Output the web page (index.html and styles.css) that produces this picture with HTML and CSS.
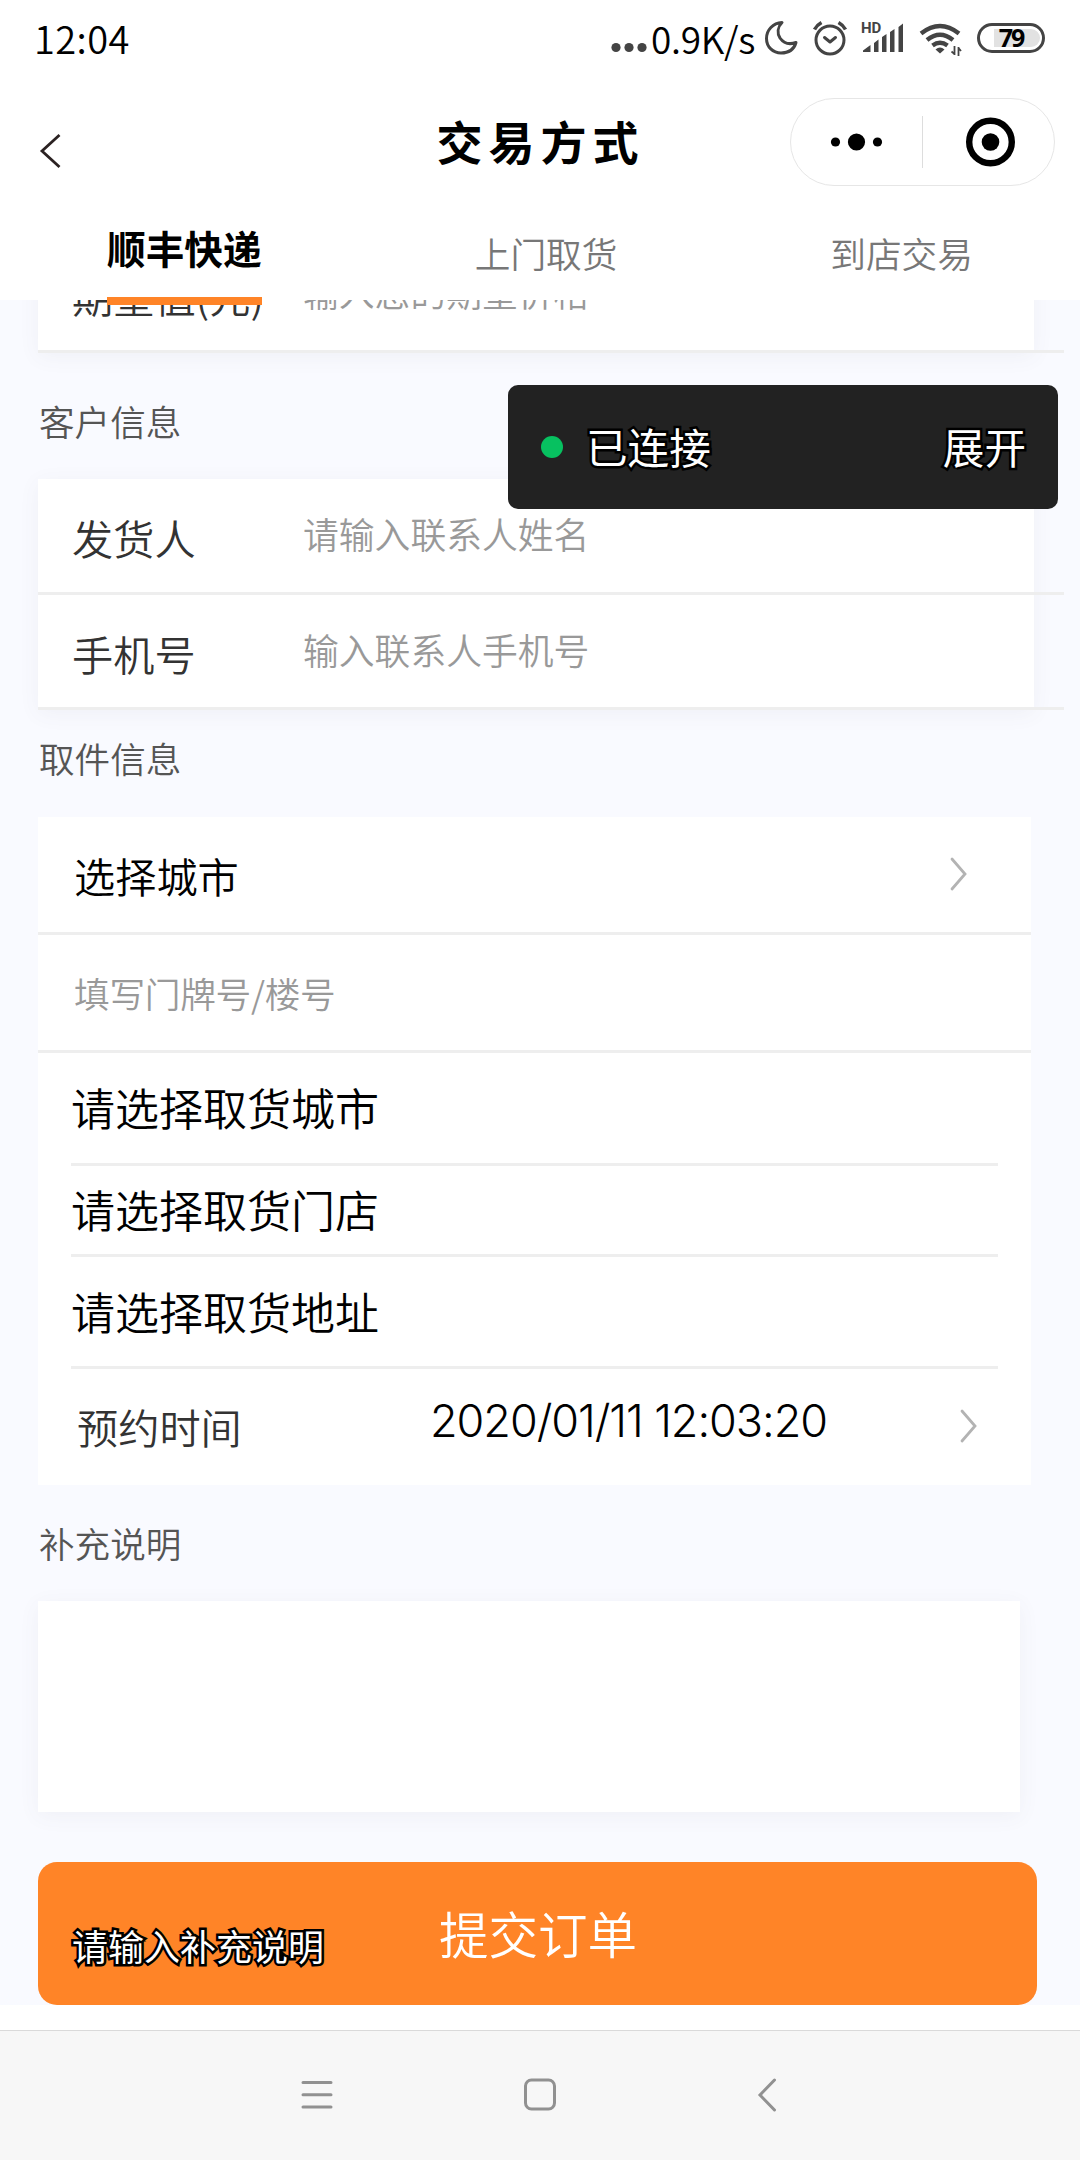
FILE: index.html
```html
<!DOCTYPE html>
<html lang="zh-CN">
<head>
  <meta charset="UTF-8" />
  <meta name="viewport" content="width=device-width, initial-scale=1.0"/>
  <title>交易方式</title>
  <link rel="stylesheet" href="styles.css">
</head>
<body>

  <header class="header">
    <!-- Status bar -->
    <div class="status-bar">
      <span class="time">12:04</span>
      <div class="status-right">
        <svg class="net-dots" width="32" height="60" viewBox="0 0 32 60">
          <circle cx="5" cy="47.5" r="4.6"/><circle cx="18" cy="47.5" r="4.6"/><circle cx="31" cy="47.5" r="4.6"/>
        </svg>
        <span class="speed">0.9K/s</span>
        <svg class="status-icons" width="290" height="60" viewBox="760 0 290 60">
          <!-- moon -->
          <path class="line" d="M782 22.5 C773 23 766.500 30 766.500 38.500 C766.500 47 773 53 781 53 C788.500 53 794 49.500 796 42.500 C789 45 783.500 43 780 38 C777 33 777.500 27 782 22.500 Z"/>
          <!-- alarm -->
          <circle class="line" cx="830" cy="40" r="14"/>
          <path class="line" d="M824.500 37.500 L830 42 L835.500 37.500"/>
          <path class="line thick" d="M814.500 29.500 Q817 25 821.500 22.500 M845.500 29.500 Q843 25 838.500 22.500"/>
          <!-- signal -->
          <text class="hd" x="861" y="33">HD</text>
          <path class="fill" d="M863 52 V50.500 L870.500 45 V52 Z M874 52 V43 L878.500 39.500 V52 Z M882 52 V37 L886.500 34 V52 Z M890 52 V32 L894.500 29 V52 Z M898.500 52 V27 L903 23.500 V52 Z"/>
          <!-- wifi -->
          <path class="line wifi" d="M921 33.500 Q940 18.500 959 33.500 M927 40 Q940 29.500 953 40 M932.500 45.500 Q940 40 947.500 45.500"/>
          <path class="fill" d="M935.500 49.500 Q940 45.500 944.500 49.500 L940 53.500 Z"/>
          <path class="line arrows" d="M954.500 55 V46 M954.500 54 L951.500 51.500 M958.500 47 V56 M958.500 48 L961 51"/>
          <!-- battery -->
          <rect class="line" x="978.500" y="24.500" width="65" height="27" rx="13.500"/>
          <path class="level" d="M994 29 H1031 a9 9 0 0 1 0 18 H994 Z"/>
          <text class="battery" x="1011" y="47" text-anchor="middle">79</text>
        </svg>
      </div>
    </div>

    <!-- Title bar -->
    <div class="title-bar">
      <svg class="back" width="24" height="40" viewBox="0 0 24 40"><path d="M21.500 4 L4 20 L21.500 36"/></svg>
      <h1>交易方式</h1>
      <div class="capsule">
        <svg width="132" height="86" viewBox="0 0 132 86">
          <circle cx="44.500" cy="43" r="4.600"/><circle cx="65.500" cy="43" r="8.600"/><circle cx="86.500" cy="43" r="4.600"/>
        </svg>
        <span class="divider"></span>
        <svg width="131" height="86" viewBox="0 0 131 86">
          <circle class="ring" cx="67.500" cy="43" r="21.300"/><circle cx="67.500" cy="43" r="8.800"/>
        </svg>
      </div>
    </div>

    <nav class="tabs">
      <span class="tab active">顺丰快递</span>
      <span class="tab">上门取货</span>
      <span class="tab">到店交易</span>
    </nav>
  </header>

  <main class="content">
    <div class="card form-card first">
      <div class="field"><span class="label">期望值(元)</span><span class="hint">输入您的期望价格</span></div>
    </div>

    <h2 class="section-title customer">客户信息</h2>
    <div class="card form-card">
      <div class="field"><span class="label">发货人</span><span class="hint">请输入联系人姓名</span></div>
      <div class="field"><span class="label">手机号</span><span class="hint">输入联系人手机号</span></div>
    </div>

    <h2 class="section-title pickup">取件信息</h2>
    <div class="pickup-card">
      <div class="row city">
        <span>选择城市</span>
        <svg class="arrow" width="20" height="36" viewBox="0 0 20 36"><path d="M3 3 L16 18 L3 33"/></svg>
      </div>
      <div class="row address">填写门牌号/楼号</div>
      <div class="picker">请选择取货城市</div>
      <div class="picker store">请选择取货门店</div>
      <div class="picker">请选择取货地址</div>
      <div class="booking">
        <span class="booking-label">预约时间</span>
        <span class="booking-time">2020/01/11 12:03:20</span>
        <svg class="arrow" width="20" height="36" viewBox="0 0 20 36"><path d="M3 3 L16 18 L3 33"/></svg>
      </div>
    </div>

    <h2 class="section-title remark">补充说明</h2>
    <div class="card remark-card"></div>

    <div class="submit">
      提交订单
      <span class="remark-hint">请输入补充说明</span>
    </div>
  </main>

  <!-- System navigation -->
  <footer class="nav-bar">
    <svg width="36" height="40" viewBox="0 0 36 40"><path d="M4 7.500 H32 M4 19.800 H32 M4 32 H32"/></svg>
    <svg width="36" height="40" viewBox="0 0 36 40"><rect x="3.500" y="5" width="29" height="29" rx="6"/></svg>
    <svg width="36" height="40" viewBox="0 0 36 40"><path d="M29.500 5 L15 20 L29.500 35"/></svg>
  </footer>

  <!-- Connection toast -->
  <div class="toast">
    <span class="dot"></span>
    <span class="toast-text">已连接</span>
    <span class="toast-text">展开</span>
  </div>

</body>
</html>
```
FILE: styles.css
```css
* {
  box-sizing: border-box;
}

body {
  margin: 0;
  width: 1080px;
  height: 2160px;
  overflow: hidden;
  position: relative;
  display: flex;
  flex-direction: column;
  background-color: #fff;
  color: #000;
  font-family: "Noto Sans CJK SC", sans-serif;
  font-weight: 350;
}

h1, h2 {
  margin: 0;
}

svg {
  display: block;
  flex: none;
}

/* Header */
.header {
  height: 300px;
  flex: none;
  position: relative;
  z-index: 1;
  background-color: #fff;
}

.status-bar {
  height: 80px;
  padding: 0 30px 0 34px;
  display: flex;
  justify-content: space-between;
}

.time {
  font-size: 38px;
  line-height: 76px;
  letter-spacing: 0.4px;
}

.status-right {
  display: flex;
}

.net-dots {
  margin-right: 8px;
  overflow: visible;
  fill: #444;
}

.speed {
  width: 109px;
  font-size: 37px;
  line-height: 76px;
  letter-spacing: -0.3px;
}

.status-icons .line {
  fill: none;
  stroke: #444;
  stroke-width: 3;
  stroke-linecap: round;
  stroke-linejoin: round;
}

.status-icons .thick {
  stroke-width: 3.6;
  stroke-linecap: butt;
}

.status-icons .wifi {
  stroke-width: 4.4;
  stroke-linecap: butt;
}

.status-icons .arrows {
  stroke-width: 1.8;
  stroke-linecap: butt;
}

.status-icons .fill {
  fill: #444;
}

.level {
  fill: #e2e2e2;
}

.hd {
  font: 700 15px Roboto, sans-serif;
  fill: #444;
}

.battery {
  font: 700 25px "Noto Sans", sans-serif;
  letter-spacing: -2px;
}

.title-bar {
  height: 140px;
  padding: 18px 25px 0 38px;
  display: flex;
  justify-content: space-between;
}

.back {
  margin-top: 33px;
  fill: none;
  stroke: #2b2222;
  stroke-width: 2.8;
}

.title-bar h1 {
  margin-left: 229px;
  font-size: 46px;
  line-height: 84px;
  font-weight: 700;
  letter-spacing: 6px;
}

.capsule {
  width: 265px;
  height: 88px;
  display: flex;
  align-items: center;
  border: 1px solid #e6e6e6;
  border-radius: 44px;
}

.divider {
  width: 1px;
  height: 52px;
  margin: 0 0 0 -1px;
  background-color: #ddd;
}

.ring {
  fill: none;
  stroke: #000;
  stroke-width: 6.4;
}

.tabs {
  height: 85px;
  padding: 0 107px;
  display: flex;
  justify-content: space-between;
}

.tab {
  height: 80px;
  font-size: 35.7px;
  line-height: 65px;
  color: #777;
}

.tab.active {
  width: 155px;
  height: 85px;
  font-size: 38.7px;
  line-height: 54px;
  font-weight: 700;
  white-space: nowrap;
  color: #000;
  border-bottom: 8px solid #ff8427;
}

/* Form */
.content {
  height: 1705px;
  flex: none;
  padding-left: 38px;
  background-color: #f9faff;
}

.card {
  background-color: #fff;
  box-shadow: 0 4px 20px rgba(90, 90, 110, 0.06);
}

.form-card {
  width: 996px;
}

.form-card.first {
  margin-top: -63px;
}

.field {
  width: 1026px;
  height: 115.5px;
  padding-left: 34px;
  display: flex;
  border-bottom: 3px solid #eee;
}

.label {
  width: 231px;
  font-size: 41.2px;
  line-height: 116px;
  color: #333;
}

.hint {
  font-size: 35.8px;
  line-height: 108px;
  color: #999;
}

.section-title {
  padding-left: 1px;
  font-size: 35.6px;
  line-height: 50px;
  font-weight: 350;
  color: #555;
}

.customer {
  padding-top: 43px;
  height: 126.5px;
}

.pickup {
  padding-top: 23px;
  height: 107px;
}

.pickup-card {
  width: 993px;
  height: 668px;
  background-color: #fff;
}

.row {
  height: 118px;
  padding: 0 62px 0 36px;
  display: flex;
  justify-content: space-between;
  align-items: center;
  border-bottom: 3px solid #eee;
}

.row.city {
  font-size: 41.2px;
}

.row.address {
  font-size: 35.7px;
  letter-spacing: -0.3px;
  color: #999;
}

.row .arrow {
  margin-bottom: 2px;
}

.arrow {
  fill: none;
  stroke: #b3b3b3;
  stroke-width: 2.8;
  stroke-linecap: round;
}

.picker {
  margin: 0 33px;
  height: 112.5px;
  font-size: 44px;
  line-height: 108px;
  border-bottom: 3px solid #eee;
}

.picker.store {
  height: 91px;
  line-height: 86px;
}

.booking {
  height: 116px;
  padding: 0 52px 0 39px;
  display: flex;
}

.booking-label {
  width: 353px;
  font-size: 41.2px;
  line-height: 115px;
  color: #333;
}

.booking-time {
  flex: 1;
  font-family: Inter, sans-serif;
  font-size: 45px;
  line-height: 104px;
  letter-spacing: -1.05px;
}

.booking .arrow {
  margin-top: 39px;
}

.remark {
  padding-top: 33px;
  height: 116px;
}

.remark-card {
  width: 982px;
  height: 211px;
}

.submit {
  position: relative;
  width: 999px;
  height: 143px;
  margin-top: 50px;
  padding-left: 401px;
  font-size: 49.5px;
  line-height: 142px;
  color: #fff;
  background-color: #ff8427;
  border-radius: 19px;
}

.remark-hint {
  position: absolute;
  left: 34px;
  top: 57px;
  font-size: 36px;
  line-height: 52px;
  font-weight: 400;
  -webkit-text-stroke: 5px #000;
  paint-order: stroke fill;
}

/* System navigation */
.nav-bar {
  height: 130px;
  margin-top: 25px;
  padding: 44px 299px 0;
  display: flex;
  justify-content: space-between;
  background-color: #f7f7f7;
  border-top: 1px solid #dadada;
}

.nav-bar svg {
  fill: none;
  stroke: #919191;
  stroke-width: 3;
  stroke-linecap: round;
}

/* Toast */
.toast {
  position: absolute;
  left: 508px;
  top: 385px;
  z-index: 2;
  width: 550px;
  height: 124px;
  padding: 0 32px 0 33px;
  display: flex;
  align-items: center;
  font-size: 41.6px;
  line-height: 60px;
  font-weight: 400;
  color: #fff;
  background-color: #222;
  border-radius: 10px;
}

.dot {
  width: 22px;
  height: 22px;
  margin-right: 23px;
  border-radius: 50%;
  background-color: #07c160;
}

.toast-text {
  padding-bottom: 3px;
  -webkit-text-stroke: 5px #000;
  paint-order: stroke fill;
}

.toast-text:last-child {
  margin-left: auto;
}
```
